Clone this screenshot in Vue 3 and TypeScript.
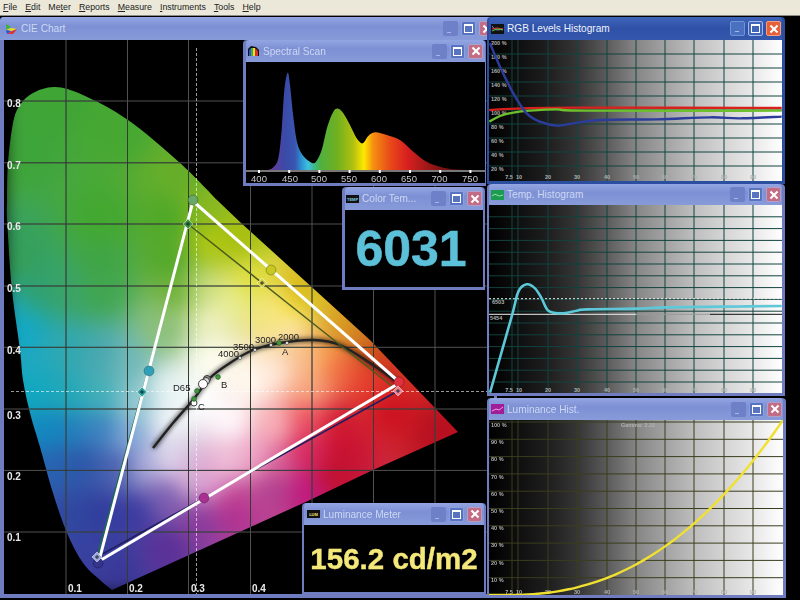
<script setup lang="ts">
import { onMounted, ref } from 'vue'

type Pt = number[]

const zoomed = (pts: Pt[], ox: number, oy: number): Pt[] => pts.map(([x, y]) => [ox + x / 3, oy + y / 3])

function smooth(pts: Pt[]): string {
  let d = `M${pts[0][0]} ${pts[0][1]}`
  for (let i = 0; i < pts.length - 1; i++) {
    const a = pts[Math.max(i - 1, 0)]
    const b = pts[i]
    const c = pts[i + 1]
    const e = pts[Math.min(i + 2, pts.length - 1)]
    d += ` C${b[0] + (c[0] - a[0]) / 6} ${b[1] + (c[1] - a[1]) / 6} ${c[0] - (e[0] - b[0]) / 6} ${c[1] - (e[1] - b[1]) / 6} ${c[0]} ${c[1]}`
  }
  return d
}

/* CIE chart */
const locus =
  smooth([
    [112, 590], [100, 580], [83, 563], [67, 533], [53, 493], [40, 447], [30, 413], [23, 380], [20, 350], [12, 290],
    [7.3, 223], [7, 200], [8, 163], [13, 123], [20, 105], [33, 93], [55, 87], [83, 95], [128, 120], [180, 163], [217, 200],
  ]) + ' L240 222 L315 290 L370 340 L413 385 L458 432 L373 470 L310 500 Z'

const anchors: [number, number, string][] = [
  [55, 95, '3fa535'], [120, 130, '46a832'], [180, 170, '66ae2a'], [20, 150, '3ea53a'], [100, 220, '43a830'],
  [170, 220, '4ea828'], [20, 260, '35a05a'], [100, 260, '40a545'], [170, 260, '52a82a'], [205, 215, '88b820'],
  [240, 240, 'a8c010'], [300, 290, 'd8b818'], [307, 300, 'd8c020'], [273, 310, 'f5e880'], [210, 240, 'b0c810'],
  [250, 280, 'e0e040'], [230, 300, 'e8ec90'], [210, 320, 'eef0c0'], [200, 290, 'c8dc80'], [180, 290, '6cb038'],
  [165, 330, '8cc07a'], [13, 310, '1fa8b8'], [20, 330, '10a8c8'], [33, 357, '20a8c0'], [66, 350, '30a8b0'],
  [100, 357, '48a8b0'], [127, 363, '70b8b8'], [33, 290, '30a070'], [66, 290, '3aa468'], [100, 290, '40a650'],
  [33, 390, '10a8c0'], [50, 430, '1088c0'], [66, 397, '20a8b8'], [100, 397, '40b0b8'], [133, 403, '90c8d0'],
  [66, 430, '1f7ebb'], [100, 430, '3a80c0'], [127, 437, '80a8d8'], [57, 463, '2860b0'], [83, 463, '2d55a8'],
  [117, 463, '4a60b0'], [143, 463, 'a8a8d8'], [167, 457, 'e0d8ec'], [73, 513, '3048a0'], [100, 513, '303c9c'],
  [133, 513, '3a3aa0'], [167, 497, '7a5cb0'], [187, 477, 'd8b0d8'], [100, 547, '3840a0'], [117, 570, '3a3898'],
  [167, 547, '5a3098'], [200, 523, '8a3a9c'], [233, 513, 'b03090'], [233, 497, 'c04090'], [227, 463, 'f0c0d8'],
  [213, 480, 'e0a0d0'], [170, 420, 'f0f4f8'], [200, 400, 'ffffff'], [230, 420, 'fff8fc'], [170, 390, 'e8f4f4'],
  [210, 360, 'fdfdf0'], [250, 380, 'fffaf0'], [273, 373, 'ffe8d8'], [307, 390, 'f8a880'], [323, 357, 'f8a050'],
  [290, 323, 'fce8b0'], [340, 367, 'f06840'], [367, 380, 'e84030'], [383, 380, 'e83028'], [273, 423, 'f8b0b8'],
  [307, 417, 'ec5060'], [340, 423, 'd01830'], [390, 407, 'cc1020'], [440, 430, 'b81020'], [257, 457, 'f0a8c8'],
  [273, 463, 'd86098'], [307, 450, 'd82860'], [340, 450, 'c81030'], [273, 487, 'b04090'], [307, 490, 'c01880'],
  [333, 477, 'c01030'], [307, 357, 'f8c090'], [340, 323, 'd8a020'], [357, 333, 'd08020'], [373, 357, 'c84818'],
  [390, 377, 'c83020'], [290, 310, 'f8e040'],
]

const chart = ref<HTMLCanvasElement | null>(null)

onMounted(() => {
  const cv = chart.value
  if (!cv) return
  const ctx = cv.getContext('2d')
  if (!ctx) return
  const w = cv.width
  const h = cv.height
  const img = ctx.createImageData(w, h)
  const rgb = anchors.map(([x, y, c]) => [x, y, parseInt(c.slice(0, 2), 16), parseInt(c.slice(2, 4), 16), parseInt(c.slice(4, 6), 16)])
  for (let py = 0; py < h; py++) {
    for (let px = 0; px < w; px++) {
      const X = px + 4
      const Y = py + 40
      let t = 0
      let r = 0
      let g = 0
      let b = 0
      for (const a of rgb) {
        const dx = X - a[0]
        const dy = Y - a[1]
        const d2 = dx * dx + dy * dy + 60
        const k = 1 / (d2 * d2)
        t += k
        r += a[2] * k
        g += a[3] * k
        b += a[4] * k
      }
      const i = (py * w + px) * 4
      img.data[i] = r / t
      img.data[i + 1] = g / t
      img.data[i + 2] = b / t
      img.data[i + 3] = 255
    }
  }
  const off = document.createElement('canvas')
  off.width = w
  off.height = h
  off.getContext('2d')?.putImageData(img, 0, 0)
  ctx.translate(-4, -40)
  ctx.clip(new Path2D(locus))
  ctx.filter = 'blur(9px)'
  ctx.drawImage(off, 4, 40)
})

const cieV = [66, 127.5, 188.5, 250.5, 312, 373.5, 435]
const cieH = [101, 162.8, 224, 286, 347.3, 409, 470.4, 532]
const cieYLabels = [
  ['0.8', 107], ['0.7', 169], ['0.6', 230], ['0.5', 292], ['0.4', 354], ['0.3', 419], ['0.2', 480], ['0.1', 541],
]
const cieXLabels = [['0.1', 68], ['0.2', 129], ['0.3', 191], ['0.4', 252]]
const planck = smooth([
  [153, 448], [173, 423], [193, 400], [210, 378], [230, 363], [253, 350], [280, 343], [313, 340], [340, 345], [373, 365], [397, 382],
])
const planckLabels = [
  ['4000', 218, 357], ['3500', 233, 350], ['3000', 255, 343], ['2000', 278, 340], ['A', 282, 355], ['B', 221, 388],
  ['D65', 173, 391], ['C', 198, 410],
]
const rings = [[240, 358], [255, 350], [271, 345], [287, 343]]
const greens = [[279, 343], [218, 377], [197, 391], [194, 399]]
const handles = [
  [193, 200, '#6aa868'], [149, 371, '#30a0b8'], [271, 270, '#c8c820'], [399, 382, '#e03040'], [98, 563, '#34348a'], [204, 498, '#a83090'],
]
const diamonds = [
  [188, 224, '#3f8f40'], [142, 392, '#2ba09a'], [262, 283, '#d8d040'], [398, 391, '#f08090'], [97, 557, '#a0a8d8'],
]

/* Spectral scan */
const spectrum =
  smooth(
    zoomed(
      [
        [85, 420], [100, 412], [115, 385], [125, 300], [133, 180], [143, 128], [150, 165], [160, 260], [172, 340], [190, 378],
        [215, 398], [228, 395], [245, 360], [262, 290], [280, 245], [295, 236], [310, 250], [330, 285], [350, 325], [368, 340],
        [385, 318], [405, 307], [440, 315], [480, 330], [520, 365], [560, 395], [600, 410], [640, 418], [670, 420],
      ],
      240,
      30,
    ),
  ) + ' Z'
const specStops: [number, string][] = [
  [270, '#6a3a9a'], [285, '#3a4aa8'], [295, '#3a55b0'], [301, '#2a90d0'], [308, '#40c0e0'], [314, '#3ab890'], [320, '#4fb040'],
  [337, '#70b020'], [353, '#b0c010'], [364, '#ffe800'], [373, '#f59010'], [390, '#e84a18'], [407, '#d82020'], [427, '#a01818'], [453, '#601010'],
]
const specLabels = [[400, 259], [450, 290], [500, 319], [550, 349], [600, 379], [650, 409], [700, 439.5], [750, 470]]
const specTicks = Array.from({ length: 8 }, (_, i) => 259 + i * 30.2)

/* Histograms */
const histV = [512, 518, 548, 577, 607, 636, 665, 694, 724, 753]
const histX = [['7.5', 509], ['10', 519], ['20', 548], ['30', 577], ['40', 607], ['50', 636], ['60', 665], ['70', 694], ['80', 724], ['90', 753]]
const rgbH = Array.from({ length: 9 }, (_, i) => 54 + i * 14)
const rgbLabels = [200, 180, 160, 140, 120, 100, 80, 60, 40, 20].map((n, i) => [`${n} %`, 45 + i * 14])
const blueCurve = smooth(zoomed([[30, 100], [60, 170], [100, 250], [140, 310], [180, 335], [230, 347], [280, 340], [360, 330], [530, 328], [690, 322], [780, 325], [905, 320]], 480, 10))
const redCurve = smooth(zoomed([[28, 300], [130, 295], [300, 293], [905, 294]], 480, 10))
const greenCurve = smooth(zoomed([[28, 335], [60, 318], [100, 308], [150, 302], [230, 298], [320, 302], [905, 302]], 480, 10))

const tempH = Array.from({ length: 15 }, (_, i) => 216.8 + i * 11.8)
const tempCurve = smooth(zoomed([[30, 578], [95, 350], [115, 275], [140, 253], [165, 265], [185, 295], [205, 332], [245, 340], [290, 332], [320, 328], [470, 326], [560, 322], [730, 320], [905, 318]], 480, 200))

const lumH = Array.from({ length: 10 }, (_, i) => 577.7 - i * 17.3)
const lumLabels = [100, 90, 80, 70, 60, 50, 40, 30, 20, 10].map((n, i) => [`${n} %`, 427 + i * 17.2])
const lumCurve = smooth(
  Array.from({ length: 31 }, (_, i) => {
    const x = 489 + i * (294 / 30)
    const t = Math.max(x - 505, 0) / 278
    return [x, 595 - 175 * Math.pow(t, 2.32)]
  }),
)
</script>

<template>
  <div class="app">
    <nav class="menu">
      <span><u>F</u>ile</span><span><u>E</u>dit</span><span>Me<u>t</u>er</span><span><u>R</u>eports</span>
      <span><u>M</u>easure</span><span><u>I</u>nstruments</span><span><u>T</u>ools</span><span><u>H</u>elp</span>
    </nav>

    <main class="desktop">
      <!-- CIE chart -->
      <section class="win cie">
        <header class="title">
          <svg class="ico" viewBox="0 0 13 12"><path d="M1 1l5 3-5 3z" fill="#40b040" /><path d="M1 7l5-2 6 1-5 2z" fill="#e8e020" /><path d="M2 11l5-3 5-2-4 5z" fill="#e03030" /><path d="M1 7l5 1-4 3z" fill="#3050d0" /></svg>
          <span class="name">CIE Chart</span>
          <div class="btns"><span class="b min"></span><span class="b max"></span><span class="b close"></span></div>
        </header>
        <div class="body">
          <canvas ref="chart" class="chart" width="490" height="554"></canvas>
          <svg class="plot" viewBox="4 40 490 554">
            <defs>
              <clipPath id="locus"><path :d="locus" /></clipPath>
              <filter id="soft" x="-10%" y="-10%" width="120%" height="120%"><feGaussianBlur stdDeviation="2" /></filter>
            </defs>
            <g stroke="#505050" stroke-width="1">
              <line v-for="x in cieV" :key="x" :x1="x" :x2="x" y1="40" y2="594" />
              <line v-for="y in cieH" :key="y" x1="4" x2="494" :y1="y" :y2="y" />
            </g>
            <g clip-path="url(#locus)" stroke="#1c2c20" stroke-opacity=".55" stroke-width="1">
              <line v-for="x in cieV" :key="x" :x1="x" :x2="x" y1="40" y2="594" />
              <line v-for="y in cieH" :key="y" x1="4" x2="494" :y1="y" :y2="y" />
            </g>
            <g stroke="#fff" stroke-width="1" stroke-dasharray="3 2" stroke-opacity=".6">
              <line x1="196.5" x2="196.5" y1="48" y2="594" />
              <line x1="11" x2="494" y1="391.5" y2="391.5" />
            </g>
            <path :d="planck" fill="none" stroke="#000" stroke-opacity=".55" stroke-width="5" filter="url(#soft)" />
            <path :d="planck" fill="none" stroke="#222" stroke-width="2.4" />
            <g fill="none" stroke="#4a5a20" stroke-width="1.4">
              <polyline points="188,224 398,391" />
              <polyline points="188,224 97,557" stroke="#1c6c48" />
              <polyline points="97,557 398,391" stroke="#1e1e60" stroke-width="1.6" />
            </g>
            <g fill="none" stroke="#fff" stroke-width="3">
              <polyline points="195,203 397,380" />
              <polyline points="192,205 100,557" />
              <polyline points="101,560 396,385" />
            </g>
            <circle v-for="h in handles" :key="String(h[2])" :cx="h[0]" :cy="h[1]" r="5" :fill="String(h[2])" stroke="#000" stroke-opacity=".25" />
            <g v-for="d in diamonds" :key="String(d[2])" :transform="`translate(${d[0]} ${d[1]})`">
              <rect x="-3.5" y="-3.5" width="7" height="7" transform="rotate(45)" :fill="String(d[2])" stroke="#fff" stroke-opacity=".6" stroke-width=".8" />
              <path d="M-2 0H2M0 -2V2" stroke="#123" stroke-width=".9" />
            </g>
            <circle cx="207" cy="379" r="3.5" fill="#999" stroke="#333" />
            <circle cx="206" cy="381" r="3.5" fill="#ddd" stroke="#333" />
            <circle cx="203" cy="384" r="4.5" fill="#fff" stroke="#444" />
            <circle cx="194" cy="403" r="3" fill="#fff" stroke="#444" />
            <circle v-for="r in rings" :key="r[0]" :cx="r[0]" :cy="r[1]" r="1.5" fill="#fff" stroke="#333" stroke-width=".6" />
            <circle v-for="g in greens" :key="g[0]" :cx="g[0]" :cy="g[1]" r="2.4" fill="#3f9a3a" stroke="#1c4c1c" stroke-width=".6" />
            <text v-for="t in planckLabels" :key="String(t[0])" class="plck" :x="t[1]" :y="t[2]">{{ t[0] }}</text>
            <text v-for="t in cieYLabels" :key="String(t[0])" class="tick" x="7" :y="t[1]">{{ t[0] }}</text>
            <text v-for="t in cieXLabels" :key="String(t[0])" class="tick" :x="t[1]" y="592">{{ t[0] }}</text>
          </svg>
        </div>
      </section>

      <!-- Spectral scan -->
      <section class="win spectral">
        <header class="title">
          <svg class="ico" viewBox="0 0 13 12"><path d="M1 11V4l3-3 5 1 3 3v6z" fill="#111" /><path d="M2 11V5l2-2v8z" fill="#3050d0" /><path d="M4 11V3h2v8z" fill="#40b040" /><path d="M6 11V3h2v8z" fill="#e8e020" /><path d="M8 11V3l3 3v5z" fill="#d83030" /></svg>
          <span class="name">Spectral Scan</span>
          <div class="btns"><span class="b min"></span><span class="b max"></span><span class="b close"></span></div>
        </header>
        <div class="body">
          <svg class="plot" viewBox="246 62 239 121">
            <defs>
              <linearGradient id="spec" gradientUnits="userSpaceOnUse" x1="270" x2="453" y1="0" y2="0">
                <stop v-for="s in specStops" :key="s[0]" :offset="(s[0] - 270) / 183" :stop-color="s[1]" />
              </linearGradient>
            </defs>
            <path :d="spectrum" fill="url(#spec)" />
            <line x1="246" x2="485" y1="171" y2="171" stroke="#eee" stroke-width="1" />
            <rect v-for="t in specTicks" :key="t" :x="t - 1" y="170" width="2" height="3" fill="#fff" />
            <text v-for="l in specLabels" :key="l[0]" class="spec" :x="l[1]" y="182" text-anchor="middle">{{ l[0] }}</text>
          </svg>
        </div>
      </section>

      <!-- Colour temperature -->
      <section class="win colortemp">
        <header class="title">
          <svg class="ico" viewBox="0 0 13 12"><rect y="2" width="13" height="8" fill="#111" /><text class="micro" x="6.5" y="8" fill="#7fd0e0" text-anchor="middle">TEMP</text></svg>
          <span class="name">Color Tem...</span>
          <div class="btns"><span class="b min"></span><span class="b max"></span><span class="b close"></span></div>
        </header>
        <div class="body readout cyan">6031</div>
      </section>

      <!-- Luminance meter -->
      <section class="win lummeter">
        <header class="title">
          <svg class="ico" viewBox="0 0 13 12"><rect y="2" width="13" height="8" fill="#111" /><text class="micro" x="6.5" y="8" fill="#f5e87a" text-anchor="middle">LUM</text></svg>
          <span class="name">Luminance Meter</span>
          <div class="btns"><span class="b min"></span><span class="b max"></span><span class="b close"></span></div>
        </header>
        <div class="body readout yellow">156.2 cd/m2</div>
      </section>

      <!-- RGB levels -->
      <section class="win rgb active">
        <header class="title">
          <svg class="ico" viewBox="0 0 13 12"><rect y="1" width="13" height="10" fill="#111" /><path d="M1 3q3 5 6 4l5-1" fill="none" stroke="#7080e0" /><path d="M1 6l5-1 6 1" fill="none" stroke="#e04040" /><path d="M1 8l5-2 6 1" fill="none" stroke="#50c040" /></svg>
          <span class="name">RGB Levels Histogram</span>
          <div class="btns"><span class="b min"></span><span class="b max"></span><span class="b close"></span></div>
        </header>
        <div class="body hist">
          <svg class="plot" viewBox="489 40 293 141">
            <g class="grid teal">
              <line v-for="x in histV" :key="x" :x1="x" :x2="x" y1="40" y2="181" />
              <line v-for="y in rgbH" :key="y" x1="489" x2="782" :y1="y" :y2="y" />
            </g>
            <text v-for="l in rgbLabels" :key="String(l[0])" class="mini" x="491" :y="l[1]">{{ l[0] }}</text>
            <text v-for="l in histX" :key="String(l[0])" class="mini" :x="l[1]" y="179" text-anchor="middle">{{ l[0] }}</text>
            <path :d="redCurve" class="curve" stroke="#d8201c" />
            <path :d="greenCurve" class="curve" stroke="#6cc02c" />
            <path :d="blueCurve" class="curve" stroke="#2c3c9c" />
          </svg>
        </div>
      </section>

      <!-- Temperature histogram -->
      <section class="win temp">
        <header class="title">
          <svg class="ico" viewBox="0 0 13 12"><rect y="1" width="13" height="10" fill="#1c9c50" /><path d="M1 7q3-3 5-1t6 0" fill="none" stroke="#9fe0a8" /></svg>
          <span class="name">Temp. Histogram</span>
          <div class="btns"><span class="b min"></span><span class="b max"></span><span class="b close"></span></div>
        </header>
        <div class="body hist">
          <svg class="plot" viewBox="489 205 293 188">
            <g class="grid teal">
              <line v-for="x in histV" :key="x" :x1="x" :x2="x" y1="205" y2="393" />
              <line v-for="y in tempH" :key="y" x1="489" x2="782" :y1="y" :y2="y" />
            </g>
            <line x1="489" x2="782" y1="298.7" y2="298.7" stroke="#eee" stroke-dasharray="2 2" />
            <line x1="489" x2="636" y1="314.3" y2="314.3" stroke="#eee" />
            <line x1="636" x2="710" y1="314.3" y2="314.3" stroke="#999" />
            <line x1="710" x2="782" y1="314.3" y2="314.3" stroke="#111" />
            <text class="mini" x="492" y="304">6503</text>
            <text class="mini" x="490" y="320">5454</text>
            <text v-for="l in histX" :key="String(l[0])" class="mini" :x="l[1]" y="392" text-anchor="middle">{{ l[0] }}</text>
            <path :d="tempCurve" class="curve cyanline" stroke="#5cc8d8" />
          </svg>
        </div>
      </section>

      <!-- Luminance histogram -->
      <section class="win lumhist">
        <header class="title">
          <svg class="ico" viewBox="0 0 13 12"><rect y="1" width="13" height="10" fill="#a01c98" /><path d="M1 8l4-2 3 1 4-3" fill="none" stroke="#f0a0e0" /></svg>
          <span class="name">Luminance Hist.</span>
          <div class="btns"><span class="b min"></span><span class="b max"></span><span class="b close"></span></div>
        </header>
        <div class="body hist">
          <svg class="plot" viewBox="489 420 294 175">
            <g class="grid olive">
              <line v-for="x in histV" :key="x" :x1="x" :x2="x" y1="420" y2="595" />
              <line v-for="y in lumH" :key="y" x1="489" x2="783" :y1="y" :y2="y" />
            </g>
            <text v-for="l in lumLabels" :key="String(l[0])" class="mini" x="491" :y="l[1]">{{ l[0] }}</text>
            <text class="mini" x="638" y="427" text-anchor="middle">Gamma: 2.32</text>
            <text v-for="l in histX" :key="String(l[0])" class="mini" :x="l[1]" y="594" text-anchor="middle">{{ l[0] }}</text>
            <path :d="lumCurve" class="curve" stroke="#f0e030" />
          </svg>
        </div>
      </section>
    </main>
  </div>
</template>

<style>
html,
body {
  margin: 0;
  background: #000;
}
</style>

<style scoped>
.app {
  width: 800px;
  height: 600px;
  display: flex;
  flex-direction: column;
  overflow: hidden;
  background: #000;
  font-family: 'Liberation Sans', Arial, sans-serif;
}
.menu {
  flex: 0 0 16px;
  box-sizing: border-box;
  display: flex;
  gap: 8px;
  padding: 2px 0 0 3px;
  background: #ebe8d9;
  border-bottom: 1px solid #8d8d88;
  color: #222;
  font-size: 8.8px;
  line-height: 11px;
}
.desktop {
  flex: 1;
  position: relative;
  filter: blur(0.4px);
}
.win {
  position: absolute;
  box-sizing: border-box;
  display: flex;
  flex-direction: column;
  border-radius: 4px 4px 0 0;
  background: #6f7cc0;
}
.title {
  display: flex;
  align-items: center;
  flex: none;
  background: linear-gradient(#93a5e2, #7d90d4 40%, #879ad9);
  border-radius: 4px 4px 0 0;
}
.ico {
  flex: none;
  width: 13px;
  height: 12px;
  margin-right: 3px;
}
.name {
  flex: 1;
  overflow: hidden;
  white-space: nowrap;
  color: #ccd8f4;
  font-size: 10.1px;
}
.btns {
  display: flex;
  gap: 3px;
  flex: none;
}
.b {
  position: relative;
  box-sizing: border-box;
  width: 15px;
  height: 15px;
  border-radius: 2px;
}
.min {
  background: #6d80c8;
}
.min::after {
  content: '';
  position: absolute;
  left: 4px;
  bottom: 3px;
  width: 4px;
  height: 1px;
  background: #a8b8e6;
}
.max {
  background: #5874c0;
  border: 1px solid #8aa0e0;
}
.max::after {
  content: '';
  position: absolute;
  inset: 2px;
  border: 1px solid #fff;
  border-top-width: 2px;
}
.close {
  background: #c26c86;
  border: 1px solid #b0a0c8;
}
.close::before,
.close::after {
  content: '';
  position: absolute;
  left: 1.5px;
  top: 5.5px;
  width: 10px;
  height: 2px;
  background: #fff;
  transform: rotate(45deg);
}
.close::after {
  transform: rotate(-45deg);
}
.active {
  background: #2c4ea0;
}
.active .title {
  background: linear-gradient(#3f63b8, #2f52a8 50%, #3558ad);
}
.active .name {
  color: #eef2fc;
}
.active .min {
  background: #4a70c0;
  border: 1px solid #6f92d8;
}
.active .max {
  background: #3f64b8;
  border-color: #9fb8ec;
}
.active .close {
  background: #e8603a;
  border-color: #f0a080;
}
.body {
  position: relative;
  flex: 1;
  min-height: 0;
  overflow: hidden;
  background: #000;
}
.plot {
  position: absolute;
  inset: 0;
  display: block;
  width: 100%;
  height: 100%;
}
.chart {
  position: absolute;
  left: 0;
  top: 0;
}
.readout {
  display: flex;
  align-items: center;
  justify-content: center;
  font-weight: 700;
  white-space: nowrap;
}
.cyan {
  padding-right: 6px;
  color: #5cc0d8;
  font-size: 50px;
  -webkit-text-stroke: 0.5px #5cc0d8;
}
.yellow {
  color: #f5e87a;
  font-size: 29.5px;
  -webkit-text-stroke: 0.4px #f5e87a;
}
.hist {
  background: linear-gradient(
    90deg,
    #000,
    #101010 10.6%,
    #1e1e1e 20%,
    #353535 30%,
    #5a5a5a 40%,
    #858585 50%,
    #a2a2a2 60%,
    #bebebe 70%,
    #d4d4d4 80%,
    #e8e8e8 90%,
    #fff
  );
}

/* window places on the desktop (page y minus the 16px menu) */
.cie {
  left: 0;
  top: 1px;
  width: 497px;
  height: 581px;
  padding: 0 3px 4px 4px;
}
.cie .title {
  height: 23px;
  margin-left: -4px;
  padding-left: 5px;
}
.spectral {
  left: 243px;
  top: 24px;
  width: 243px;
  height: 146px;
  padding: 0 1px 3px 3px;
}
.spectral .title {
  height: 22px;
  padding: 0 2px 0 1px;
}
.colortemp {
  left: 342px;
  top: 171px;
  width: 143px;
  height: 103px;
  padding: 0 2px 3px 3px;
}
.colortemp .title {
  height: 23px;
  padding: 0 1px;
}
.lummeter {
  left: 302px;
  top: 487px;
  width: 184px;
  height: 91px;
  padding: 0 2px 2px;
}
.lummeter .title {
  height: 22px;
  padding: 0 2px 0 3px;
}
.rgb {
  left: 487px;
  top: 1px;
  width: 298px;
  height: 167px;
  padding: 0 3px 3px 2px;
}
.rgb .title {
  height: 23px;
  padding: 0 1px 0 2px;
}
.temp {
  left: 487px;
  top: 168px;
  width: 298px;
  height: 212px;
  padding: 0 3px 3px 2px;
}
.temp .title {
  height: 21px;
  padding: 0 1px 0 2px;
}
.lumhist {
  left: 487px;
  top: 382px;
  width: 299px;
  height: 200px;
  padding: 0 3px 3px 2px;
}
.lumhist .title {
  height: 22px;
  padding: 0 1px 0 2px;
}

/* plot styling */
.grid line {
  stroke-width: 1;
}
.teal line {
  stroke: #12423e;
}
.olive line {
  stroke: #3c3c1e;
}
.curve {
  fill: none;
  stroke-width: 2.4;
}
.cyanline {
  stroke-width: 2.6;
}
.tick {
  fill: #e8e8e8;
  font-size: 10px;
  font-weight: 700;
}
.plck {
  fill: #1c1c1c;
  font-size: 9.5px;
}
.spec {
  fill: #c8c8c8;
  font-size: 9.5px;
}
.mini {
  fill: #b0b0b0;
  font-size: 5.5px;
  font-weight: 700;
}
.micro {
  font-size: 4px;
  font-weight: 700;
}
</style>
